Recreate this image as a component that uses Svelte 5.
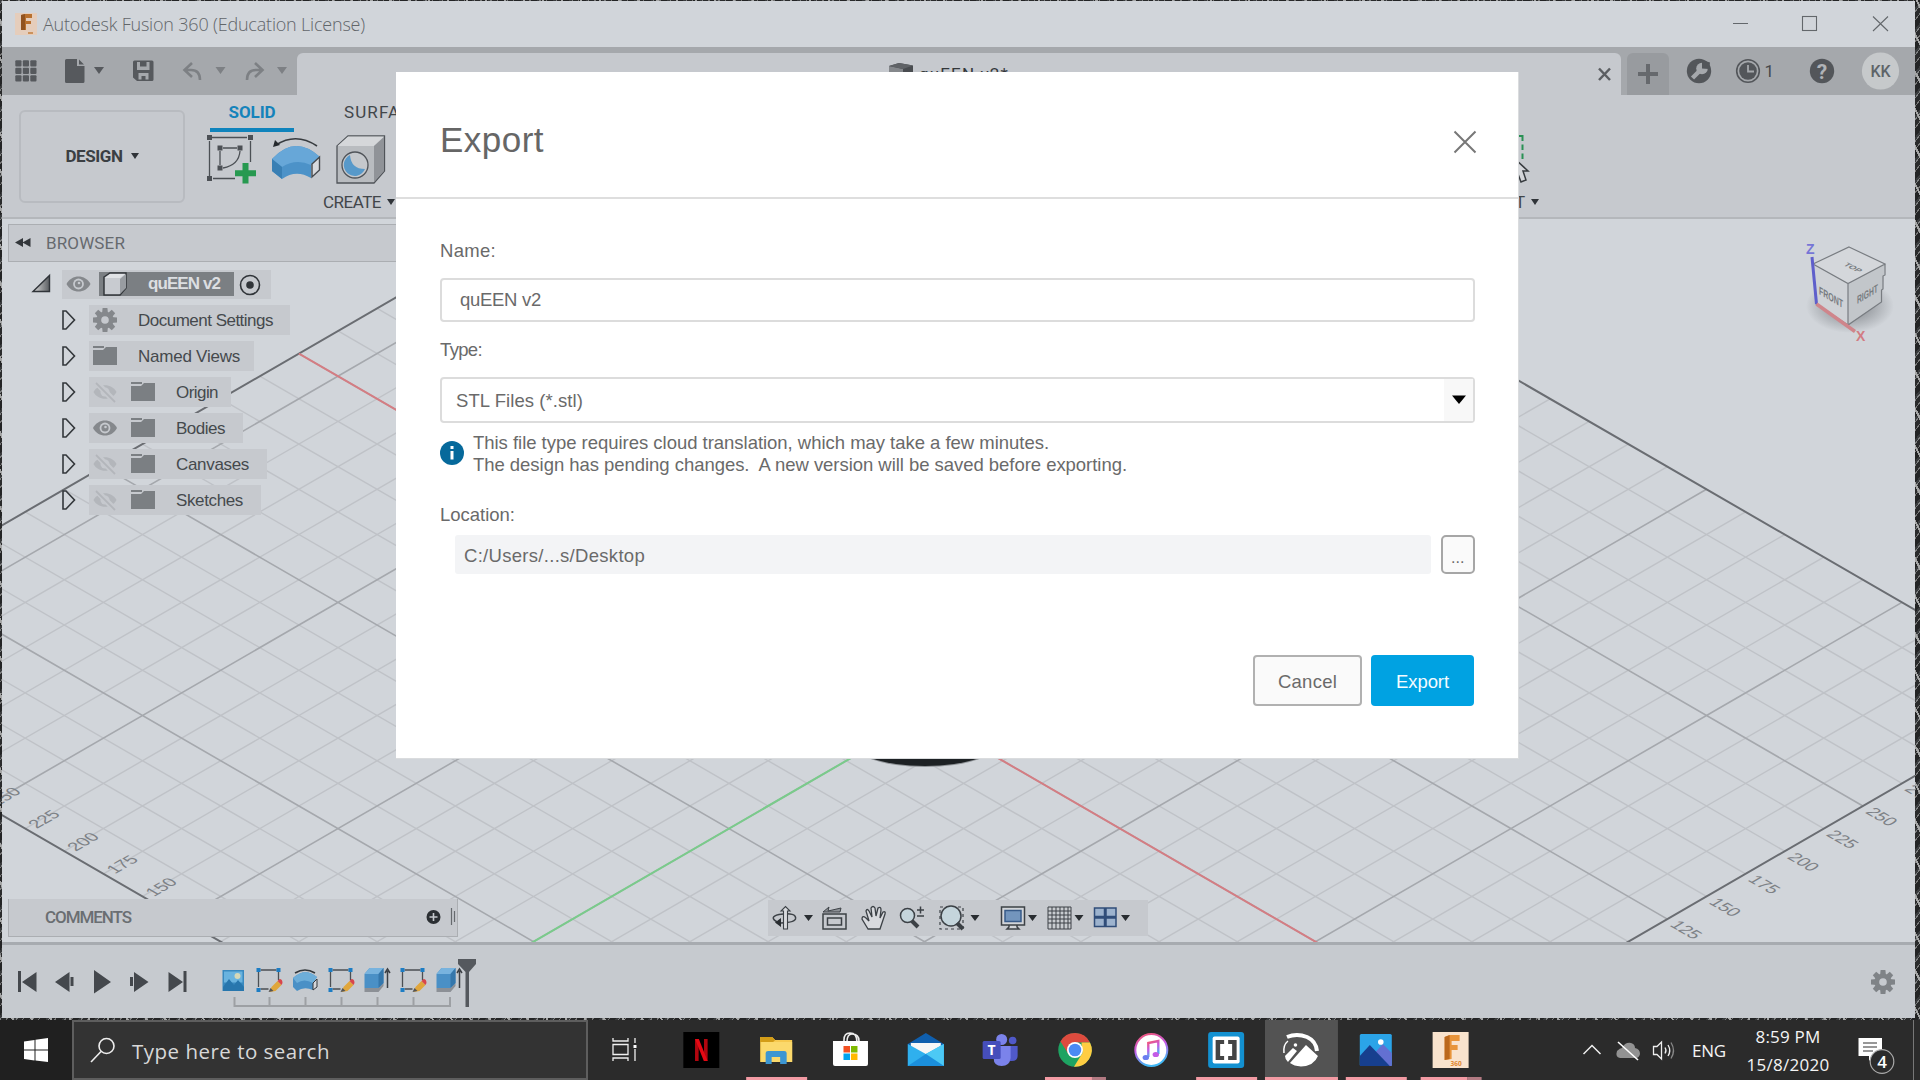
<script>
  // Spreads a label's letters so that it takes the given width.
  function fit(node, width) {
    const natural = node.getBoundingClientRect().width;
    node.style.letterSpacing = `${(width - natural) / node.textContent.length}px`;
  }

  // Isometric ground grid, in cells of 25 mm around the origin.
  const ox = 924.500, oy = 715.500, sx = 39.1, sy = 22.62;
  const at = (a, b) => [ox + (a + b) * sx, oy + (a - b) * sy];
  const line = (p, q) => `M${p[0]} ${p[1]}L${q[0]} ${q[1]}`;
  const A0 = -16, A1 = 14, B0 = -14, B1 = 15;
  let minor = '', major = '';
  for (let a = A0 + 1; a < A1; a++) {
    const d = line(at(a, B0), at(a, B1));
    if (a % 5 === 0) major += d; else minor += d;
  }
  for (let b = B0 + 1; b < B1; b++) {
    const d = line(at(A0, b), at(A1, b));
    if (b % 5 === 0) major += d; else minor += d;
  }
  const border = line(at(A0, B0), at(A0, B1)) + line(at(A0, B1), at(A1, B1)) + line(at(A1, B1), at(A1, B0)) + line(at(A1, B0), at(A0, B0));
  const leftMarks = [10, 9, 8, 7, 6, 5].map((n) => ({ n: n * 25, p: at(-n, B0) }));
  const rightMarks = [11, 10, 9, 8, 7, 6, 5].map((n) => ({ n: n * 25, p: at(A1, n) }));

  const tree = [
    { label: 'Document Settings', kind: 'gear', w: 201, tw: 135 },
    { label: 'Named Views', kind: 'folder', w: 165, tw: 102 },
    { label: 'Origin', kind: 'hidden', w: 142, tw: 42 },
    { label: 'Bodies', kind: 'shown', w: 154, tw: 49 },
    { label: 'Canvases', kind: 'hidden', w: 178, tw: 73 },
    { label: 'Sketches', kind: 'hidden', w: 172, tw: 67 }
  ];

  const slot = 75.17;
  const apps = [
    { id: 'taskview', cx: 624 },
    { id: 'netflix', cx: 701 },
    { id: 'explorer', cx: 776, run: 1 },
    { id: 'store', cx: 851 },
    { id: 'mail', cx: 926 },
    { id: 'teams', cx: 1000.5 },
    { id: 'chrome', cx: 1075.5, run: 2 },
    { id: 'music', cx: 1151 },
    { id: 'brackets', cx: 1226, run: 1 },
    { id: 'slicer', cx: 1301.5, run: 3 },
    { id: 'photos', cx: 1376, run: 1 },
    { id: 'fusion', cx: 1451, run: 2 }
  ];
  const teeth = [0, 45, 90, 135, 180, 225, 270, 315];
</script>

{#snippet gear(x, y, s, fill, hole)}
  <g transform="translate({x} {y}) scale({s})" {fill}>
    {#each teeth as t}<path d="M-2.4 -12H2.4L3 -6H-3Z" transform="rotate({t})" />{/each}
    <circle r="8.6" /><circle r="3.8" fill={hole} />
  </g>
{/snippet}

{#snippet eye(x, y)}
  <g transform="translate({x} {y})">
    <path d="M-12 0C-7 -10 7 -10 12 0C7 10 -7 10 -12 0Z" fill="#85888c" />
    <circle r="5.4" fill="#c6c9ce" /><circle r="3.6" fill="#85888c" /><circle cx="0.5" cy="-1" r="1.3" fill="#c6c9ce" />
  </g>
{/snippet}

{#snippet sketch(x)}
  <g transform="translate({x} 980)">
    <path d="M-10 -8V7M-8 -10H8M10 -8V0M-8 9H0" fill="none" stroke="#4b4f54" stroke-width="1.3" />
    <path d="M-12 -12h4v4h-4zM8 -12h4v4H8zM-12 8h4v4h-4z" fill="#1d7dc4" />
    <path d="M1 12L3 7L9 1L13 5L7 11Z" fill="#e0a63c" /><path d="M9 1l2-2q3 0 3 4l-1 2z" fill="#d8454b" /><path d="M0 12l2-4 3 3z" fill="#555" />
  </g>
{/snippet}

{#snippet extrude(x)}
  <g transform="translate({x} 980)">
    <path d="M-12 8H2L7 3V6L2 12H-12Z" fill="#8c9096" />
    <path d="M-12 -6L-7 -12H7V3L2 8H-12Z" fill="#4a90c6" /><path d="M-12 -6L-7 -12H7L2 -6Z" fill="#78b3de" /><path d="M2 -6L7 -12V3L2 8Z" fill="#3577ab" />
    <path d="M11 8V-9M8.5 -7L11 -11L13.5 -7" stroke="#3c4045" stroke-width="1.5" fill="none" />
  </g>
{/snippet}

<div class="desktop">
  <div class="window">
    <header class="titlebar">
      <svg class="applogo" viewBox="14 11 24 24">
        <rect x="15" y="12" width="22" height="22" fill="#e5cdbb" /><path d="M21 14l4-1h7v4h-6v3h5v3h-5v6h-5z" fill="#b9702d" /><path d="M21 14l4-1v16h-4z" fill="#915320" /><path d="M28 32h5" stroke="#cc925c" stroke-width="2" />
      </svg>
      <span class="apptitle" use:fit={322}>Autodesk Fusion 360 (Education License)</span>
      <svg class="winbuttons" viewBox="1720 1 195 46" fill="none" stroke="#63676b" stroke-width="1.1">
        <path d="M1733 23.5H1748M1873 16.5L1888 31M1888 16.5L1873 31" /><rect x="1802.5" y="16.500" width="14" height="14" />
      </svg>
    </header>

    <div class="tabbar">
      <svg class="quick" viewBox="2 47 295 48" fill="#56595d">
        {#each [0, 1, 2] as r}{#each [0, 1, 2] as c}<rect x={15.300 + c * 7.500} y={60.300 + r * 7.500} width="6.200" height="6.200" rx="1" />{/each}{/each}
        <path d="M65 60.500q0-1.500 1.500-1.500H77V66H84.500V81.500q0 1.500-1.500 1.500H66.500q-1.500 0-1.500-1.500ZM79 59.500L84 64.500H79Z" />
        <path d="M94 67h10l-5 7z" />
        <path fill-rule="evenodd" d="M134.500 60.500H152q1.500 0 1.500 1.500V79.500q0 1.500-1.500 1.500H137L133 77.500V62q0-1.500 1.500-1.500ZM137 62v8h12.500v-8h-3v4.500H140V62ZM138.500 73v6.500h3V76h4v3.500h3V73Z" />
        <g fill="none" stroke="#7d8084" stroke-width="2.600"><path d="M192 63L184.500 70L192 77M185 70H191Q200 70 200 80M255 63L262.500 70L255 77M262 70H256Q247 70 247 80" /></g>
        <path d="M215.500 67h10l-5 7zM277 67h10l-5 7z" fill="#7d8084" />
      </svg>
      <div class="doctab">
        <svg class="doccube" viewBox="888 60 26 26"><path d="M889 65L899 62L913 64.500V84H889Z" fill="#494c50" /><path d="M889 65L903 68V84H889Z" fill="#85888c" /><path d="M889 65L899 62L913 64.500L903 68Z" fill="#606367" /></svg>
        <span class="docname" use:fit={90}>quEEN v2*</span>
        <svg class="docclose" viewBox="1594 64 20 20"><path d="M1599 68.500L1610 80M1610 68.500L1599 80" stroke="#5b5e62" stroke-width="2.500" /></svg>
      </div>
      <div class="newtab"><svg viewBox="0 0 20 20"><path d="M10 0V20M0 10H20" stroke="#66696d" stroke-width="4" /></svg></div>
      <svg class="tools" viewBox="1669 47 246 48">
        <circle cx="1699" cy="71" r="12.200" fill="#53565a" />
        <path d="M1692.500 78L1700 70.500" stroke="#a5a8ac" stroke-width="4.500" /><circle cx="1702" cy="68.500" r="5.800" fill="#a5a8ac" /><path d="M1702 68.500L1702 60L1710 62.500L1709 69Z" fill="#53565a" />
        <circle cx="1748" cy="71" r="11.300" fill="none" stroke="#53565a" stroke-width="1.600" /><circle cx="1748" cy="71" r="8.800" fill="#53565a" /><path d="M1748 65v6.500h6" fill="none" stroke="#a5a8ac" stroke-width="1.800" />
        <text x="1764.500" y="77" class="robo" font-size="17" fill="#45484c">1</text>
        <circle cx="1822" cy="71" r="12.200" fill="#53565a" /><text x="1822" y="78.500" class="robo" font-size="21" font-weight="700" text-anchor="middle" fill="#b0b3b7">?</text>
        <circle cx="1880.500" cy="71" r="18.600" fill="#c6c9cb" /><text x="1880.500" y="76.500" class="robo" font-size="16" font-weight="500" text-anchor="middle" textLength="20" fill="#5e6468">KK</text>
      </svg>
    </div>

    <div class="ribbon">
      <button class="workspace"><span use:fit={57}>DESIGN</span><i class="caret"></i></button>
      <div class="groups">
        <div class="ribbontabs"><span class="active"><b use:fit={47}>SOLID</b></span><span use:fit={79}>SURFACE</span></div>
        <svg class="bigicons" viewBox="200 134 196 54">
          <g fill="none" stroke="#4c5055" stroke-width="1.300"><path d="M212 137.500H247M209.500 141V176M250.500 141V162M213 178.500H235M223 148H237M220 151V165M240 151Q239 165 223 168" /></g>
          <path fill="#4c5055" d="M207 135h5v5h-5zM248 135h5v5h-5zM207 176h5v5h-5zM217.500 145.500h5v5h-5zM237.500 145.500h5v5h-5zM217.500 165.500h5v5h-5z" />
          <path d="M245.500 163v20.500M235 173.200h21" stroke="#279950" stroke-width="6" />
          <path d="M272 159Q295 134 320 157L311 165V178Q296 169 282 179L272 171Z" fill="#4c92c8" /><path d="M272 159Q295 134 320 157L311 165Q296 158 282 167Z" fill="#67a7d8" /><path d="M272 159L282 167V179L272 171Z" fill="#397fb4" />
          <path d="M312 164L319.500 157V170L312 177Z" fill="#d8dade" stroke="#45494d" stroke-width="1.400" />
          <path d="M276 145Q296 132 317 146" stroke="#373b3f" stroke-width="1.600" fill="none" /><path d="M273 147L275 140L280 145Z" fill="#25292d" />
          <path d="M337 146L348 136H384.500V171L374 183H337Z" fill="#b9bcc0" stroke="#505459" stroke-width="1.300" /><path d="M337.500 146L348 136.500H384L374 146Z" fill="#d5d7da" /><path d="M374 146L384 137V171L374 182Z" fill="#909398" />
          <circle cx="355" cy="165" r="13" fill="#c5c8cc" stroke="#505459" stroke-width="1.300" /><path d="M350 155A11 11 0 1 0 365 169Q351 169 350 155Z" fill="#5799ca" />
        </svg>
        <div class="create"><span use:fit={58}>CREATE</span><i class="caret"></i></div>
      </div>
      <div class="selectgroup">
        <svg viewBox="1500 134 30 54"><path d="M1516 136H1522.500V141M1522.500 144.500V150M1522.500 153.500V159" stroke="#299154" stroke-width="2" fill="none" /><path d="M1514 158L1528 171H1523L1526 180L1521 182L1518 174L1514 177Z" fill="#d4d6da" stroke="#373b3f" stroke-width="1.500" /></svg>
        <div class="selectlabel"><span use:fit={58}>SELECT</span><i class="caret"></i></div>
      </div>
    </div>

    <main class="viewport">
      <svg class="scene" viewBox="2 219 1913 723">
        <path d={minor} stroke="#bfc2c7" stroke-width="1.400" />
        <path d={major} stroke="#a5a8ad" stroke-width="1.600" />
        <path d={border} stroke="#6a6d72" stroke-width="2" />
        <path d={line(at(A0, 0), at(A1, 0))} stroke="#d47d83" stroke-width="2" />
        <path d={line(at(0, B0), at(0, 0))} stroke="#7acb8b" stroke-width="2" />
        <g class="marks">
          {#each leftMarks as m}<text transform="matrix(.866 -.5 .866 .5 {m.p[0] + 11.500} {m.p[1] + 0.500})">{m.n}</text>{/each}
          {#each rightMarks as m}<text transform="matrix(.866 .5 -.866 .5 {m.p[0] + 1.500} {m.p[1] + 6.500})">{m.n}</text>{/each}
        </g>
        <ellipse cx="925" cy="740.500" rx="76" ry="26.500" fill="#8f9397" /><ellipse cx="925" cy="739.500" rx="76" ry="26.500" fill="#1d2124" />
        <defs>
          <radialGradient id="shade"><stop offset=".4" stop-color="#777b80" stop-opacity=".6" /><stop offset="1" stop-color="#777b80" stop-opacity="0" /></radialGradient>
        </defs>
        <ellipse cx="1850" cy="306" rx="44" ry="27" fill="url(#shade)" />
        <path d="M1813 264L1848 283.500V325L1816 304Z" fill="#cfd2d6" /><path d="M1848 283.500L1885 264L1881.500 302L1848 325Z" fill="#c2c6ca" /><path d="M1849 247L1885 264L1848 283.500L1813 264Z" fill="#d4d7db" />
        <path d="M1849 247L1885 264L1848 283.500L1813 264ZM1848 283.500V325L1881.500 302V290L1883 289V276L1885 275V264M1848 325L1816 304" fill="none" stroke="#787c81" stroke-width="1.200" />
        <path d="M1812 257L1816.500 304" stroke="#5f5fcb" stroke-width="3" /><path d="M1816.500 304L1855 331.500" stroke="#cf858b" stroke-width="3.500" />
        <g class="cube"><text transform="matrix(.78 .46 0 1.25 1819 294)">FRONT</text><text transform="matrix(.75 -.44 0 1.25 1857 304)">RIGHT</text><text transform="matrix(.85 .42 -.75 .42 1843 265)">TOP</text></g>
        <text x="1806" y="254" class="axis" fill="#7676d6">Z</text><text x="1856" y="341" class="axis" fill="#d27c83">X</text>
      </svg>

      <aside class="browser">
        <div class="browserhead"><svg viewBox="0 0 16 12"><path d="M8 1V10L0 5.500ZM15.500 1V10L7.500 5.500Z" fill="#33373b" /></svg><span use:fit={79}>BROWSER</span></div>
        <div class="root">
          <svg class="rootarrow" viewBox="30 270 24 28"><defs><linearGradient id="tri"><stop stop-color="#ddd" /><stop offset="1" stop-color="#5a5d61" /></linearGradient></defs><path d="M33 291.500L49.500 275.500V291.500Z" fill="url(#tri)" stroke="#303439" stroke-width="1.400" /></svg>
          <div class="rootpill">
            <svg class="rooteye" viewBox="62 269 37 29">{@render eye(78.5, 283)}</svg>
            <div class="rootname"><svg viewBox="100 272 30 24"><path d="M105 277L111 273H127V288L121 295H105Z" fill="#c8cbd0" stroke="#33373b" stroke-width="1.500" /><path d="M106 278L111 274H126L121 278Z" fill="#e0e2e5" /><path d="M121 279L127 274V288L121 294Z" fill="#989ca1" /></svg><b use:fit={72}>quEEN v2</b></div>
            <svg class="target" viewBox="235 269 37 29"><circle cx="251" cy="284" r="9.500" fill="none" stroke="#303439" stroke-width="1.600" /><circle cx="251" cy="284" r="3.800" fill="#303439" /></svg>
          </div>
        </div>
        {#each tree as row}
          <div class="row">
            <svg class="arrow" viewBox="0 0 16 22"><path d="M2 2H5L13.500 11L5 20H2Z" fill="#d1d5da" stroke="#33373b" stroke-width="1.600" /></svg>
            <div class="pill" style:width="{row.w}px">
              <svg class="mark" viewBox="0 0 30 30">
                {#if row.kind === 'gear'}{@render gear(16, 15, 1, '#85888c', '#c6c9ce')}
                {:else if row.kind === 'shown'}{@render eye(16, 15)}
                {:else if row.kind === 'hidden'}<path d="M4.500 15C9 6 23 6 27.500 15C23 24 9 24 4.500 15Z" fill="#b3b6bb" /><circle cx="16" cy="15" r="4.500" fill="#c6c9ce" /><path d="M7 5L26 25" stroke="#c6c9ce" stroke-width="6" /><path d="M7 6L26 25" stroke="#b3b6bb" stroke-width="1.800" />
                {:else}<path d="M4 5H15V7H4ZM4 9H14L17 6H28V24H4Z" fill="#7b7f83" />{/if}
              </svg>
              {#if row.kind === 'shown' || row.kind === 'hidden'}<svg class="folder" viewBox="0 0 26 30"><path d="M1 5H12V7H1ZM1 9H11L14 6H25V24H1Z" fill="#7b7f83" /></svg>{/if}
              <span use:fit={row.tw}>{row.label}</span>
            </div>
          </div>
        {/each}
      </aside>

      <div class="comments"><span use:fit={86}>COMMENTS</span>
        <svg viewBox="420 900 36 36"><circle cx="433.500" cy="918" r="7" fill="#2b2f33" /><path d="M433.500 914v8M429.500 918h8" stroke="#c6c9ce" stroke-width="1.600" /><path d="M451.500 909v17M454.500 912v11" stroke="#666a6e" stroke-width="1.200" /></svg>
      </div>

      <svg class="navbar" viewBox="768 900 380 36">
        <g fill="none" stroke="#3c4146" stroke-width="1.500">
          <path d="M778 922.500Q768 917 779 914.500Q797 912 795.500 919Q794 923 777 923" /><path d="M783.500 929V911H781L785.500 906.500L790 911H787.500V929Z" fill="#d8dade" stroke-width="1.100" />
          <path d="M823 914H846V929H823ZM827.500 918H841.500V925H827.500Z" /><path d="M823 912L829 907L828 911L841 908L840 912Z" fill="#8d9196" stroke-width="1" />
          <path d="M868 929L862 919Q862 915 866 918L869 921L866 911Q867 908 869 911L872 917L871 908Q873 905 875 908L876 916L878 908Q881 906 881 910L880 918L883 912Q886 911 885 914L882 923L880 929Z" fill="#d8dade" stroke-width="1.300" />
          <circle cx="907.500" cy="915.500" r="7" fill="#c5d5dc" /><path d="M912 921L918 927" stroke-width="4" /><path d="M917 910H924M920.500 906.500V913.500M917 916H924" />
          <path d="M940 907H963V929H940Z" stroke-dasharray="3 3" stroke-width="1.200" /><circle cx="951" cy="916" r="10" fill="#c5d5dc" /><path d="M957 923L963 929" stroke-width="4" />
          <path d="M1001.500 907H1024.500V925H1001.500ZM1009 925V927L1007 929H1019L1017 927V925" fill="#d2d5d9" /><path d="M1005 910.500H1021V921.500H1005Z" fill="#7395bd" stroke="#385b89" />
          <path d="M1048 907H1071V929H1048ZM1052 907V929M1056 907V929M1060 907V929M1064 907V929M1068 907V929M1048 911H1071M1048 915H1071M1048 919H1071M1048 923H1071" fill="#c9ccd0" stroke-width="1" />
          <path d="M1094.500 908H1104.500V916.500H1094.500ZM1106 908H1116V916.500H1106ZM1094.500 918H1104.500V926.500H1094.500ZM1106 918H1116V926.500H1106Z" fill="#9db3ce" stroke="#304d79" />
        </g>
        <path d="M775 922.500L781 918V927ZM804 915h9l-4.500 6zM970.500 915h9l-4.500 6zM1028 915h9l-4.500 6zM1074.500 915h9l-4.500 6zM1121 915h9l-4.500 6z" fill="#292d31" />
      </svg>
    </main>

    <footer class="timeline">
      <svg class="steps" viewBox="2 945 500 73">
        <g fill="#44484d">
          <path d="M18 971h3v21h-3zM36.500 972V992L22 982ZM69.500 972V992L55 982ZM70.500 977h3v9h-3zM94 970V993.500L111 982ZM130 977h3v9h-3zM134 972V992L148.500 982ZM168.500 972V992L183 982ZM183.500 971h3v21h-3z" />
        </g>
        <rect x="222.500" y="970" width="21.500" height="21" fill="#3989bf" /><rect x="224" y="971.500" width="18.500" height="11" fill="#69b3df" /><path d="M223 987L229 979L234 985L238 980L244 987V991H223Z" fill="#2776ad" /><circle cx="237.500" cy="976" r="3" fill="#d5d8b8" />
        {@render sketch(268.5)}
        <path d="M293 978Q305 967 317 977L313 983V990Q304 986 297 991L293 987Z" fill="#4a90c6" /><path d="M293 978Q305 967 317 977L313 983Q304 978 297 983Z" fill="#6daed9" /><path d="M295 973Q305 967 315 973" fill="none" stroke="#33373b" stroke-width="1.600" /><path d="M313 983L317 979V987L313 990Z" fill="#d4d6da" stroke="#33373b" />
        {@render sketch(340.5)}{@render extrude(376.5)}{@render sketch(412.5)}{@render extrude(448.5)}
        <path d="M234.500 997V1006H450V997M269.500 997V1006M305.500 997V1006M341.500 997V1006M377.500 997V1006M413.500 997V1006" stroke="#9da0a4" stroke-width="2" fill="none" />
        <path d="M458 959H476V964L469 972V1007H465.500V972L458 964Z" fill="#55595e" />
      </svg>
      <svg class="settings" viewBox="0 0 30 30">{@render gear(15, 15, 1, '#7f8387', '#c6cacf')}</svg>
    </footer>
  </div>

  <section class="dialog">
    <div class="dialoghead"><h1 use:fit={104}>Export</h1><svg viewBox="0 0 24 24"><path d="M1.500 1.500L22.500 22.500M22.500 1.500L1.500 22.500" stroke="#777" stroke-width="2" /></svg></div>
    <div class="form">
      <label class="lab" for="name"><span use:fit={56}>Name:</span></label>
      <div class="field nameinput" id="name"><span use:fit={81}>quEEN v2</span></div>
      <div class="lab typelab"><span use:fit={42}>Type:</span></div>
      <div class="field select"><span use:fit={127}>STL Files (*.stl)</span><div class="drop"><svg viewBox="0 0 14 10"><path d="M0 0.500H14L7 9Z" /></svg></div></div>
      <div class="info">
        <svg viewBox="0 0 24 24"><circle cx="12" cy="12" r="12" fill="#06699b" /><path d="M12 10V18.500M12 5V8" stroke="#fff" stroke-width="3" /></svg>
        <div><p use:fit={576}>This file type requires cloud translation, which may take a few minutes.</p><p use:fit={654}>The design has pending changes.&nbsp; A new version will be saved before exporting.</p></div>
      </div>
      <div class="lab loclab"><span use:fit={75}>Location:</span></div>
      <div class="path"><div class="pathbox"><span use:fit={181}>C:/Users/...s/Desktop</span></div><button class="more">...</button></div>
      <div class="actions"><button class="cancel"><span use:fit={59}>Cancel</span></button><button class="primary"><span use:fit={53}>Export</span></button></div>
    </div>
  </section>

  <nav class="taskbar">
    <button class="start"><svg viewBox="0 0 24 24" fill="#fff"><path d="M0 3.500L10.500 2V11.500H0ZM11.500 1.800L24 0V11.500H11.500ZM0 12.500H10.500V22.500L0 21ZM11.500 12.500H24V24L11.500 22.500Z" /></svg></button>
    <div class="search"><svg viewBox="0 0 26 26"><circle cx="16.500" cy="9" r="7.500" fill="none" stroke="#eee" stroke-width="1.600" /><path d="M11 14.500L1 25" stroke="#eee" stroke-width="1.600" /></svg><span use:fit={198}>Type here to search</span></div>
    <div class="apps">
      {#each apps as app, i}
        <div class="app">
          <svg viewBox="{587.5 + i * slot} 1020 {slot} 60">
            {#if app.run === 3}<rect x="1265" y="1020" width="73" height="60" fill="#535353" /><path d="M1265 1077h73v3h-73z" fill="#f29aa3" />
            {:else if app.run === 2}<path d="M{app.cx - 30} 1077h47v3h-47z" fill="#f29aa3" /><path d="M{app.cx + 17} 1077h14v3h-14z" fill="#b27a82" />
            {:else if app.run}<path d="M{app.cx - 30} 1077h61v3h-61z" fill="#f29aa3" />{/if}
            {#if app.id === 'taskview'}
              <path d="M612.500 1038V1041H627.500V1038M612.500 1061V1058H627.500V1061M612.500 1044.500H627.500V1054.500H612.500ZM634.500 1038V1043M634.500 1049V1061" fill="none" stroke="#f0f0f0" stroke-width="1.300" /><path d="M633 1045h3v3h-3z" fill="#fff" />
            {:else if app.id === 'netflix'}
              <path d="M683 1032h36v36h-36z" /><path d="M696.500 1039V1061M705.500 1039V1061" stroke="#b1060f" stroke-width="3.600" /><path d="M694.700 1039H698.500L707.300 1061H703.500Z" fill="#e50914" />
            {:else if app.id === 'explorer'}
              <path d="M760 1037H772L775 1040H792V1062H760Z" fill="#f7ca50" /><path d="M760 1037H772L775 1040L773 1042H760Z" fill="#d39d18" /><path d="M761 1042H792V1062H761Z" fill="#fbd96c" /><path d="M765.500 1064V1053Q765.500 1051 768 1051H784Q786.500 1051 786.500 1053V1064H780V1057H771.500V1064Z" fill="#3d96d2" />
            {:else if app.id === 'store'}
              <path d="M844 1042V1040Q844 1033 850 1033Q857 1033 857 1042M847 1042Q847 1034 852 1034Q859 1034 859 1041" fill="none" stroke="#eee" stroke-width="1.600" /><path d="M833 1041H868V1064Q868 1066 866 1066H835Q833 1066 833 1064Z" fill="#fff" />
              <path d="M843.500 1046h6.500v6.500h-6.500z" fill="#f25022" /><path d="M851 1046h6.500v6.500h-6.500z" fill="#7fba00" /><path d="M843.500 1053.500h6.500v6.500h-6.500z" fill="#00a4ef" /><path d="M851 1053.500h6.500v6.500h-6.500z" fill="#ffb900" />
            {:else if app.id === 'mail'}
              <path d="M908 1044L926 1033L944 1044V1066H908Z" fill="#0f5fae" /><path d="M911 1043H941V1056H911Z" fill="#f6f6f6" /><path d="M908 1044L926 1054L944 1044V1066H908Z" fill="#2fb0ee" /><path d="M944 1044V1066L926 1054Z" fill="#4cc9f5" /><path d="M908 1066L926 1054L944 1066Z" fill="#1b8fdc" />
            {:else if app.id === 'teams'}
              <circle cx="1002" cy="1039.500" r="5.500" fill="#7b83eb" /><circle cx="1013" cy="1040.500" r="3.800" fill="#5059c9" /><path d="M1010 1046H1018V1056Q1018 1061 1012 1061H1010Z" fill="#5059c9" /><path d="M994 1046H1011V1058Q1010 1066 1002 1066T994 1058Z" fill="#7b83eb" /><rect x="983" y="1041" width="18" height="18" rx="1.500" fill="#464ebb" /><text x="992" y="1055" font-size="14" font-weight="700" text-anchor="middle" fill="#fff">T</text>
            {:else if app.id === 'chrome'}
              <circle cx="1075.500" cy="1050" r="16.700" fill="#1ea362" /><path d="M1061 1041.500A16.700 16.700 0 0 1 1090.500 1042.500H1075.500L1069 1054Z" fill="#dd4b3e" /><path d="M1090.500 1042.500A16.700 16.700 0 0 1 1074.500 1066.700L1083 1053L1082 1042.500Z" fill="#ffcd42" /><circle cx="1075.500" cy="1050" r="8" fill="#fff" /><circle cx="1075.500" cy="1050" r="6.300" fill="#4b8af4" />
            {:else if app.id === 'music'}
              <defs><linearGradient id="ring" x2="0.300" y2="1"><stop stop-color="#f6556b" /><stop offset=".5" stop-color="#c35be6" /><stop offset="1" stop-color="#42b8f5" /></linearGradient></defs>
              <circle cx="1151" cy="1050" r="16" fill="#fff" stroke="url(#ring)" stroke-width="2" /><path d="M1148 1057V1043L1158 1041V1054" fill="none" stroke="url(#ring)" stroke-width="2.400" /><ellipse cx="1145.500" cy="1057.500" rx="3.200" ry="2.600" fill="#6a7df0" /><ellipse cx="1155.500" cy="1054.500" rx="3.200" ry="2.600" fill="#c35be6" />
            {:else if app.id === 'brackets'}
              <rect x="1208" y="1032" width="36" height="36" rx="3" fill="#1391d1" /><rect x="1212.500" y="1036.500" width="27" height="27" rx="2" fill="#fff" /><path d="M1224 1040H1215.500V1060H1224V1056H1220V1044H1224ZM1228 1040H1236.500V1060H1228V1056H1232V1044H1228Z" fill="#444" />
            {:else if app.id === 'slicer'}
              <path d="M1287 1037Q1297 1033 1307 1037Q1316 1041 1317 1051" fill="none" stroke="#fff" stroke-width="4" /><path d="M1285 1056L1293 1048L1297 1051L1288 1062Q1285 1059 1285 1056ZM1290 1063L1306 1045L1318 1056Q1314 1066 1301 1066.500Q1294 1066 1290 1063Z" fill="#fff" /><path d="M1284 1053Q1283 1045 1288 1041" fill="none" stroke="#fff" stroke-width="1.500" /><circle cx="1295.500" cy="1045" r="1.800" fill="#fff" />
            {:else if app.id === 'photos'}
              <rect x="1360" y="1034" width="32" height="32" rx="1.500" fill="#2ba4e8" /><path d="M1374 1054L1383 1044L1392 1053V1066H1374Z" fill="#6370d2" /><path d="M1360 1056L1370 1045L1390 1066H1360Z" fill="#173f8e" /><circle cx="1381" cy="1042" r="2.800" fill="#fff" />
            {:else}
              <path d="M1433 1032h36v36h-36z" fill="#f9e3cd" /><path d="M1445 1037L1450 1035H1460V1041H1452V1045H1458V1050H1452V1059L1445 1060Z" fill="#e8943a" /><path d="M1445 1037L1450 1035V1059L1445 1060Z" fill="#bb681d" /><text x="1451" y="1066" font-size="6.500" font-weight="700" fill="#e0862d">360</text>
            {/if}
          </svg>
        </div>
      {/each}
    </div>
    <svg class="tray" viewBox="1576 1020 110 60">
      <path d="M1583.500 1054L1592 1045.500L1600.500 1054" fill="none" stroke="#eee" stroke-width="1.500" />
      <path d="M1620 1058Q1615 1057 1617 1051Q1620 1048 1622 1048Q1625 1042 1631 1043Q1635 1044 1635 1048Q1640 1049 1640 1054Q1639 1058 1636 1058Z" fill="#929292" /><path d="M1618 1042L1638 1060" stroke="#fff" stroke-width="1.600" />
      <path d="M1653.500 1046.500H1657L1661.500 1042V1059L1657 1054.500H1653.500ZM1665 1047.500Q1667 1050.500 1665 1053.500M1668 1045Q1671.500 1050.500 1668 1056" fill="none" stroke="#eee" stroke-width="1.300" /><path d="M1671 1042.500Q1676 1050.500 1671 1058.500" fill="none" stroke="#888" stroke-width="1.300" />
    </svg>
    <div class="lang"><span use:fit={34}>ENG</span></div>
    <div class="clock"><span use:fit={65}>8:59 PM</span><span use:fit={83}>15/8/2020</span></div>
    <svg class="notice" viewBox="1850 1020 70 60"><path d="M1858.500 1038H1882V1056H1873L1869 1061V1056H1858.500Z" fill="#fff" /><path d="M1863 1043h14M1863 1047h14M1863 1051h10" stroke="#333" stroke-width="1.200" /><circle cx="1882" cy="1061.500" r="11.800" fill="#2b2b2b" stroke="#aaa" stroke-width="1.200" /><text x="1882" y="1067.500" font-size="17" font-weight="600" text-anchor="middle" fill="#fff">4</text><path d="M1913.500 1020v60" stroke="#777" /></svg>
  </nav>
</div>

<style>
  :global(body) { margin: 0; overflow: hidden; }
  * { box-sizing: border-box; }
  svg { display: block; flex: none; }
  button { font: inherit; color: inherit; padding: 0; margin: 0; }
  span, b, h1, p { white-space: pre; flex: none; }
  .desktop { position: relative; width: 1920px; height: 1080px; padding: 1px 5px 0 2px; display: flex; flex-direction: column; font-family: "Liberation Sans", Arial, sans-serif;
    background: repeating-linear-gradient(63deg, transparent 0 4px, #a5a6a6 4px 6px, transparent 6px 17px), repeating-linear-gradient(127deg, #393b3d 0 2px, #7d7f80 2px 3px, #2a2b2c 3px 7px, #777 7px 8px, #232425 8px 13px); }
  .window { width: 1913px; height: 1017px; display: flex; flex-direction: column; background: #c6c9ce; margin-bottom: 2px; flex: none; }
  .robo { font-family: Roboto, sans-serif; }
  .caret { width: 0; height: 0; border: 4.5px solid transparent; border-top: 6.5px solid #303439; border-bottom: 0; flex: none; }

  .titlebar { height: 46px; flex: none; background: #d1d5da; display: flex; align-items: center; padding-left: 12px; }
  .applogo { width: 24px; height: 24px; margin-top: -1px; }
  .apptitle { margin-left: 5px; font: 300 18px "Open Sans", sans-serif; color: #62666a; }
  .winbuttons { width: 195px; height: 46px; margin-left: auto; }

  .tabbar { height: 48px; flex: none; background: #a5a8ac; display: flex; align-items: flex-end; }
  .quick { width: 295px; height: 48px; }
  .doctab { width: 1324px; height: 42px; background: #c6c9ce; border-radius: 6px 6px 0 0; display: flex; align-items: center; padding-left: 591px; }
  .doccube { width: 26px; height: 26px; }
  .docname { font: 17px Roboto, sans-serif; color: #33373b; margin: 0 0 0 5px; }
  .docclose { width: 20px; height: 20px; margin-left: auto; margin-right: 7px; }
  .newtab { width: 42px; height: 42px; margin-left: 6px; border-radius: 6px 6px 0 0; background: #989b9f; display: flex; align-items: center; justify-content: center; }
  .newtab svg { width: 20px; height: 20px; }
  .tools { width: 246px; height: 48px; }

  .ribbon { height: 124px; flex: none; border-bottom: 2px solid #b4b7bb; background: #c6c9ce; display: flex; font: 17px Roboto, sans-serif; color: #42464a; }
  .workspace { width: 166px; height: 93px; margin: 15px 0 0 17px; border: 2px solid #b8bbc0; border-radius: 6px; background: none; display: flex; align-items: center; justify-content: center; gap: 8px; font-weight: 700; color: #3b3f43; padding-bottom: 1px; }
  .groups { width: 200px; margin-left: 15px; display: flex; flex-direction: column; }
  .ribbontabs { display: flex; height: 39px; align-items: flex-start; padding: 7px 0 0 10px; }
  .ribbontabs > .active { width: 84px; height: 30px; border-bottom: 4px solid #0f83bc; color: #1583bb; text-align: center; margin-right: 50px; }
  .bigicons { width: 196px; height: 54px; }
  .create { display: flex; align-items: center; gap: 6px; padding-left: 123px; height: 28px; }
  .selectgroup { margin-left: 1100px; padding-top: 39px; width: 50px; display: flex; flex-direction: column; }
  .selectgroup svg { width: 30px; height: 54px; }
  .selectlabel { display: flex; align-items: center; gap: 6px; height: 28px; margin-left: -33px; }

  .viewport { position: relative; height: 723px; flex: none; background: #d1d5da; }
  .scene { width: 1913px; height: 723px; position: absolute; left: 0; top: 0; }
  .marks { font-size: 17px; fill: #7d8186; }
  .cube { font-size: 9px; fill: #777b80; font-weight: 700; }
  .axis { font-size: 14px; font-weight: 700; }
  .browser { position: absolute; left: 6px; top: 5px; width: 400px; display: flex; flex-direction: column; font-size: 17px; color: #45494d; }
  .browserhead { height: 38px; border: 1.500px solid #abaeb2; background: #c6c9ce; display: flex; align-items: center; gap: 15px; padding: 0 0 1px 6px; font: 17px Roboto, sans-serif; color: #666a6e; margin-bottom: 7px; }
  .browserhead svg { width: 16px; height: 12px; margin-top: 1px; }
  .root { display: flex; height: 30px; margin-bottom: 6px; align-items: center; padding-left: 22px; }
  .rootarrow { width: 24px; height: 28px; margin-right: 8px; }
  .rootpill { display: flex; align-items: center; background: #c6c9ce; }
  .rooteye { width: 37px; height: 29px; }
  .rootname { width: 135px; height: 24px; background: #7b7f83; color: #dcdee1; display: flex; align-items: center; gap: 19px; }
  .rootname svg { width: 30px; height: 24px; }
  .target { width: 37px; height: 29px; }
  .row { height: 30px; margin-bottom: 6px; display: flex; align-items: center; padding-left: 53px; }
  .arrow { width: 16px; height: 22px; margin-right: 12px; }
  .pill { height: 30px; background: #c6c9ce; display: flex; align-items: center; }
  .mark { width: 30px; height: 30px; }
  .folder { width: 26px; height: 30px; margin-left: 11px; }
  .pill span { margin: 2px 0 0 20px; }
  .mark + span { margin-left: 19px; }
  .comments { position: absolute; left: 6px; top: 680px; width: 450px; height: 38px; background: #c6c9ce; border: 1.500px solid #abaeb2; border-top: 0; display: flex; align-items: center; justify-content: space-between; padding: 0 1px 1px 36px; font: 500 17px Roboto, sans-serif; color: #6a6e72; }
  .comments svg { width: 36px; height: 36px; }
  .navbar { position: absolute; left: 766px; top: 681px; width: 380px; height: 36px; background: #c6c9ce; }

  .timeline { height: 76px; flex: none; border-top: 3px solid #a7abb0; background: #c6cacf; display: flex; justify-content: space-between; align-items: center; }
  .steps { width: 500px; height: 73px; }
  .settings { width: 30px; height: 30px; margin-right: 17px; }

  .dialog { position: absolute; left: 396px; top: 72px; width: 1123px; height: 687px; background: #fff; border: 1px solid #dadcde; border-width: 0 1px 1px 0; color: #6a6a6a; display: flex; flex-direction: column; }
  .dialoghead { height: 127px; flex: none; border-bottom: 2px solid #dedede; display: flex; justify-content: space-between; padding: 0 41px 0 44px; align-items: center; }
  h1 { font-weight: 400; font-size: 35px; margin: 11px 0 0; line-height: 40px; color: #666; }
  .dialoghead svg { width: 24px; height: 24px; margin-top: 14px; }
  .form { padding: 37px 43px 0 44px; font-size: 18.500px; display: flex; flex-direction: column; }
  .lab { height: 30px; display: flex; align-items: center; }
  .field { border: 2px solid #dcdcdc; border-radius: 4px; display: flex; align-items: center; justify-content: space-between; }
  .nameinput { height: 44px; margin-top: 12px; padding-left: 18px; }
  .typelab { margin-top: 13px; }
  .select { height: 46px; margin-top: 12px; padding-left: 14px; }
  .select > span { margin-top: 2px; }
  .drop { width: 29px; height: 42px; background: #f8f8f8; display: flex; align-items: center; justify-content: center; }
  .drop svg { width: 14px; height: 10px; }
  .info { display: flex; gap: 9px; align-items: center; margin-top: 8px; height: 46px; }
  .info > svg { width: 24px; height: 24px; margin-top: -2px; }
  .info p { margin: 0; line-height: 22.500px; width: max-content; }
  .loclab { margin-top: 23px; }
  .path { display: flex; justify-content: space-between; margin: 5px 0 0 15px; height: 39px; }
  .pathbox { width: 976px; background: #f3f4f6; border-radius: 3px; display: flex; align-items: center; padding: 2px 0 0 9px; }
  .more { width: 34.500px; border: 2px solid #a6a6a6; border-radius: 5px; background: #fafafa; font-size: 16px; padding-top: 6px; }
  .actions { display: flex; justify-content: flex-end; gap: 9px; margin-top: 81px; height: 51px; padding-right: 1px; }
  .cancel { width: 109px; border: 2px solid #b1b1b1; border-radius: 4px; background: #fafafa; padding-top: 2px; }
  .primary { width: 103px; border: 0; border-radius: 4px; background: #00a2e2; color: #f4fbff; padding-top: 2px; }

  .taskbar { position: absolute; left: 0; top: 1020px; width: 1920px; height: 60px; background: #2b2b2b; display: flex; color: #f4f4f4; font-family: "Open Sans", sans-serif; }
  .start { width: 72px; border: 0; background: #202020; display: flex; align-items: center; justify-content: center; }
  .start svg { width: 24px; height: 24px; }
  .search { width: 515.500px; border: 2px solid #5e5e5e; background: #333; display: flex; align-items: center; gap: 16px; padding-left: 16px; font-size: 20.500px; color: #d8d8d8; }
  .search svg { width: 26px; height: 26px; }
  .search span { margin-top: 1px; }
  .apps { display: flex; width: 902px; flex: none; }
  .app { width: 75.170px; height: 60px; flex: none; }
  .app svg { width: 75.170px; height: 60px; }
  .tray { width: 110px; height: 60px; margin-left: 86.500px; }
  .lang { width: 54px; display: flex; align-items: center; padding-left: 6px; font-size: 17px; }
  .clock { width: 96px; display: flex; flex-direction: column; align-items: center; justify-content: center; font-size: 17px; line-height: 28px; padding-top: 1px; }
  .notice { width: 70px; height: 60px; margin-left: 14px; }
</style>
